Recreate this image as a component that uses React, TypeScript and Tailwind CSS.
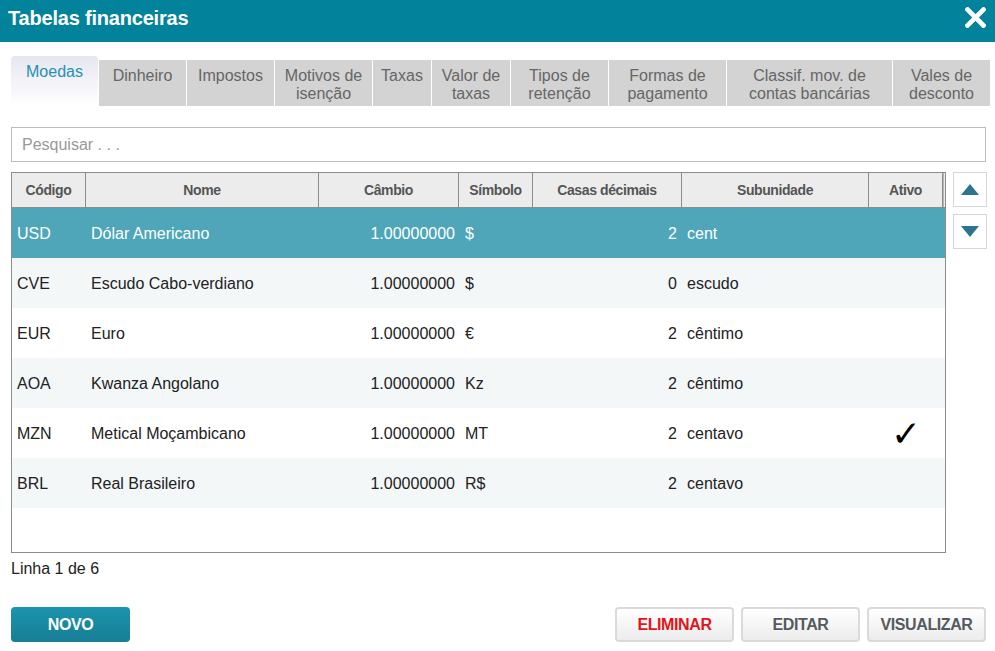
import React from "react";

const tabs: { label: string[]; w: string }[] = [
  { label: ["Dinheiro"], w: "w-[87px]" },
  { label: ["Impostos"], w: "w-[87px]" },
  { label: ["Motivos de", "isenção"], w: "w-[97px]" },
  { label: ["Taxas"], w: "w-[58px]" },
  { label: ["Valor de", "taxas"], w: "w-[78px]" },
  { label: ["Tipos de", "retenção"], w: "w-[97px]" },
  { label: ["Formas de", "pagamento"], w: "w-[117px]" },
  { label: ["Classif. mov. de", "contas bancárias"], w: "w-[165px]" },
  { label: ["Vales de", "desconto"], w: "w-[97px]" },
];

const rows = [
  { c: "USD", n: "Dólar Americano", x: "1.00000000", s: "$", d: "2", u: "cent", a: false },
  { c: "CVE", n: "Escudo Cabo-verdiano", x: "1.00000000", s: "$", d: "0", u: "escudo", a: false },
  { c: "EUR", n: "Euro", x: "1.00000000", s: "€", d: "2", u: "cêntimo", a: false },
  { c: "AOA", n: "Kwanza Angolano", x: "1.00000000", s: "Kz", d: "2", u: "cêntimo", a: false },
  { c: "MZN", n: "Metical Moçambicano", x: "1.00000000", s: "MT", d: "2", u: "centavo", a: true },
  { c: "BRL", n: "Real Brasileiro", x: "1.00000000", s: "R$", d: "2", u: "centavo", a: false },
];

const cols = "grid grid-cols-[74px_233px_140px_74px_149px_187px_74px_2px]";

export default function App() {
  return (
    <div className="w-[995px] h-[651px] bg-white overflow-hidden font-['Liberation_Sans',Arial,sans-serif]">
      {/* Title bar */}
      <div className="h-[42px] bg-[#03829b] flex items-start justify-between pl-[8px] pr-[9px]">
        <div className="pt-[5px] text-white font-bold text-[20px] leading-[26px] tracking-[-0.2px]">
          Tabelas financeiras
        </div>
        <svg className="mt-[7px]" width="21" height="21" viewBox="0 0 21 21">
          <path d="M2.5 2.5 L18.5 18.5 M18.5 2.5 L2.5 18.5" stroke="white" strokeWidth="4.6" strokeLinecap="square" />
        </svg>
      </div>

      <div className="pl-[11px] pr-[9px] pt-[14px]">
        {/* Tabs */}
        <div className="flex items-end gap-[1px] h-[50px] mr-[-4px]">
          <div className="w-[87px] h-[50px] rounded-t-[4px] bg-gradient-to-b from-[#e6e6f0] to-white text-center text-[16px] leading-[18px] text-[#2590b3] pt-[7px]">
            Moedas
          </div>
          {tabs.map((t, i) => (
            <div
              key={i}
              className={`${t.w} h-[46px] bg-[#d3d3d3] text-center text-[16px] leading-[18px] text-[#666] pt-[7px] whitespace-nowrap`}
            >
              {t.label.map((l, j) => (
                <div key={j}>{l}</div>
              ))}
            </div>
          ))}
        </div>

        {/* Search */}
        <div className="mt-[21px] h-[35px] border border-[#bcbcbc] flex items-center px-[10px] text-[16px] text-[#999]">
          Pesquisar . . .
        </div>

        {/* Table + scroll buttons */}
        <div className="mt-[10px] flex gap-[7px]">
          <div className="w-[935px] h-[381px] border border-[#8c8c8c] bg-white">
            <div className={`${cols} h-[35px] bg-[#ececec] border-b border-[#8c8c8c] text-[14px] font-bold text-[#555] tracking-[-0.4px]`}>
              {["Código", "Nome", "Câmbio", "Símbolo", "Casas décimais", "Subunidade", "Ativo"].map((h, i) => (
                <div key={i} className="border-r border-[#8c8c8c] flex items-center justify-center whitespace-nowrap overflow-hidden">
                  {h}
                </div>
              ))}
              <div className="border-l border-[#b5b5b5]" />
            </div>
            {rows.map((r, i) => {
              const sel = i === 0;
              const bg = sel ? "bg-[#4fa6b9] text-white" : i % 2 === 1 ? "bg-[#f3f7f8] text-[#222]" : "bg-white text-[#222]";
              return (
                <div key={i} className={`${cols} h-[50px] items-center pt-[2px] text-[16px] ${bg}`}>
                  <div className="pl-[5px]">{r.c}</div>
                  <div className="pl-[5px] whitespace-nowrap">{r.n}</div>
                  <div className="pr-[4px] text-right">{r.x}</div>
                  <div className="pl-[6px]">{r.s}</div>
                  <div className="pr-[5px] text-right">{r.d}</div>
                  <div className="pl-[5px]">{r.u}</div>
                  <div className="text-center text-[36px] leading-[30px] text-black font-['DejaVu_Sans',sans-serif]">
                    {r.a ? "✓" : ""}
                  </div>
                  <div />
                </div>
              );
            })}
          </div>
          <div className="flex flex-col gap-[7px]">
            <div className="w-[34px] h-[35px] border border-[#d6d6d6] bg-white flex items-center justify-center">
              <svg width="18" height="11" viewBox="0 0 18 11">
                <path d="M9 0 L18 11 L0 11 Z" fill="#2c7590" />
              </svg>
            </div>
            <div className="w-[34px] h-[35px] border border-[#d6d6d6] bg-white flex items-center justify-center">
              <svg width="18" height="11" viewBox="0 0 18 11">
                <path d="M0 0 L18 0 L9 11 Z" fill="#2c7590" />
              </svg>
            </div>
          </div>
        </div>

        {/* Footer */}
        <div className="mt-[6px] h-[20px] text-[16px] leading-[20px] text-[#222]">Linha 1 de 6</div>

        <div className="mt-[28px] flex items-center">
          <button className="w-[119px] h-[35px] rounded-[4px] pt-[1px] bg-gradient-to-b from-[#1c94ae] to-[#167e95] text-white font-bold text-[16px] tracking-[-0.4px]">
            NOVO
          </button>
          <div className="flex-1" />
          <div className="flex gap-[7px]">
            <button className="w-[119px] h-[35px] rounded-[4px] pt-[1px] border-2 border-[#dadada] bg-gradient-to-b from-white to-[#ececec] text-[#e4141b] font-bold text-[16px] tracking-[-0.4px]">
              ELIMINAR
            </button>
            <button className="w-[119px] h-[35px] rounded-[4px] pt-[1px] border-2 border-[#dadada] bg-gradient-to-b from-white to-[#ececec] text-[#545a60] font-bold text-[16px] tracking-[-0.4px]">
              EDITAR
            </button>
            <button className="w-[119px] h-[35px] rounded-[4px] pt-[1px] border-2 border-[#dadada] bg-gradient-to-b from-white to-[#ececec] text-[#545a60] font-bold text-[16px] tracking-[-0.4px]">
              VISUALIZAR
            </button>
          </div>
        </div>
      </div>
    </div>
  );
}
